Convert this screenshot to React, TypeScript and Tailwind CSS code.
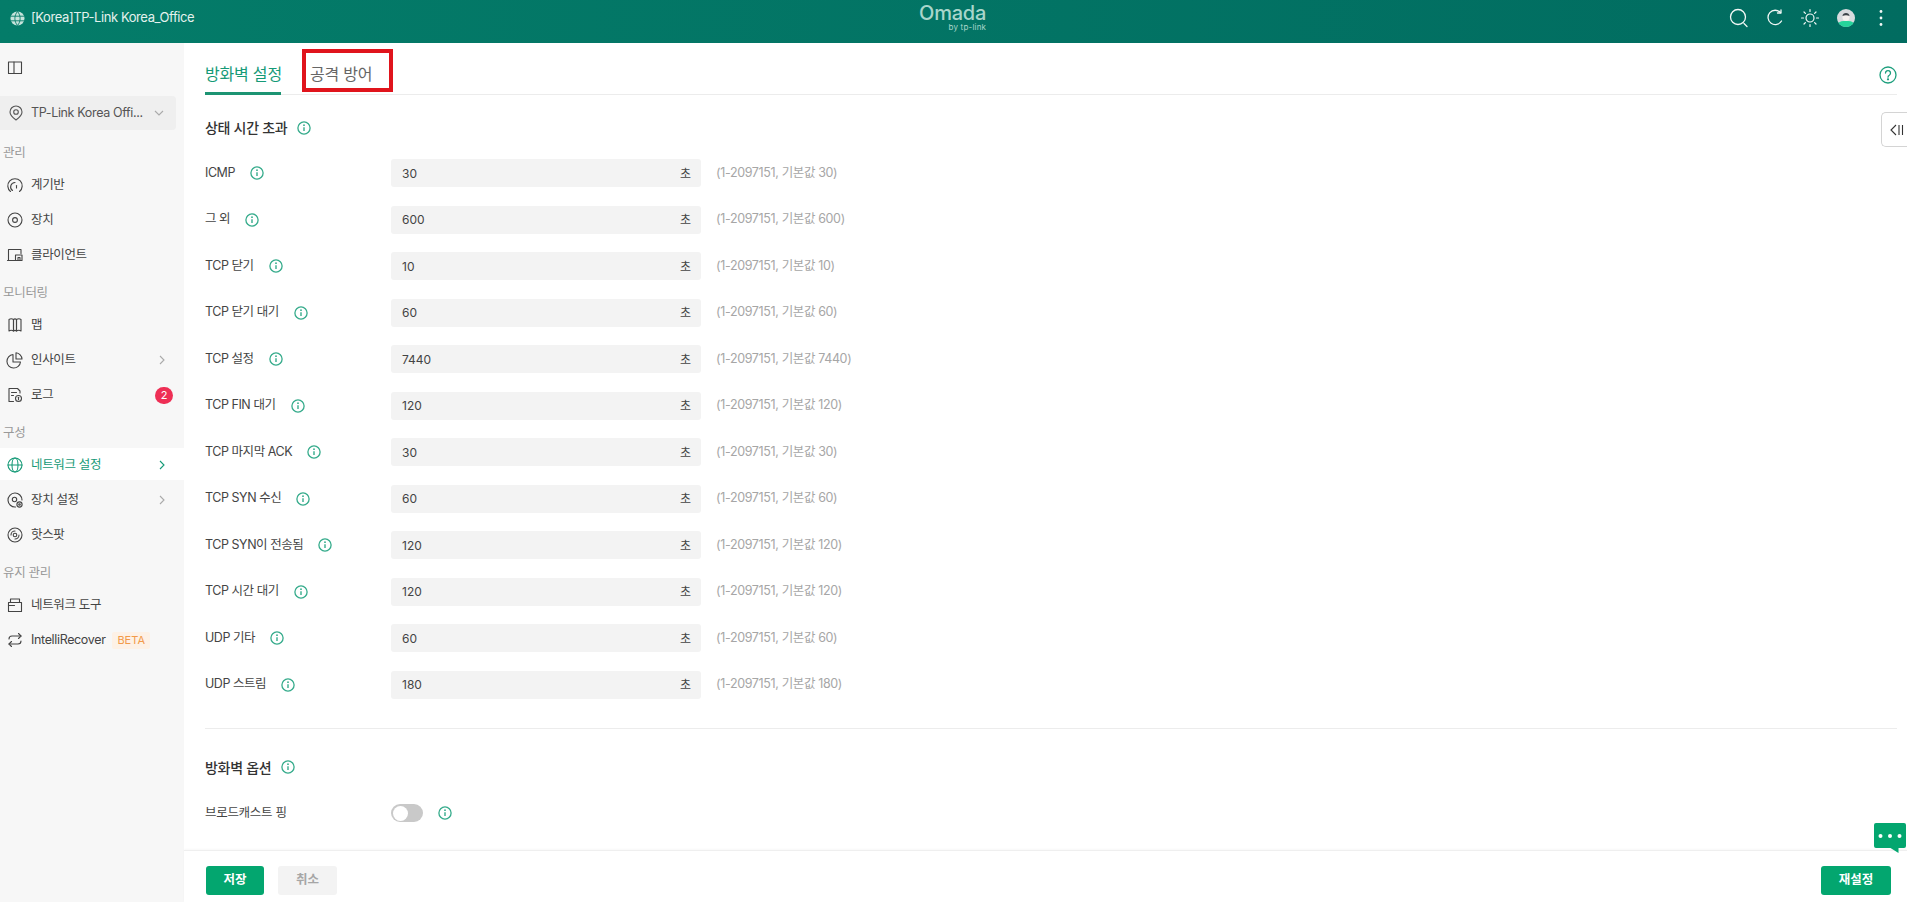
import React from "react";

const FONT = "font-[family-name:Inter,'Noto_Sans_CJK_KR',sans-serif]";

type IconProps = { className?: string };

const Svg = ({ className, children, size = 18 }: IconProps & { children: React.ReactNode; size?: number }) => (
  <svg width={size} height={size} viewBox="0 0 18 18" fill="none" stroke="currentColor" strokeWidth={1.1} strokeLinecap="round" strokeLinejoin="round" className={className}>
    {children}
  </svg>
);

const Info = () => (
  <svg width="14" height="14" viewBox="0 0 14 14" fill="none" className="shrink-0 text-[#35ab8b]">
    <circle cx="7" cy="7" r="6.1" stroke="currentColor" strokeWidth="1.3" />
    <circle cx="7" cy="4.2" r="0.9" fill="currentColor" />
    <path d="M7 6.2V10" stroke="currentColor" strokeWidth="1.4" />
  </svg>
);

const Panel = () => (
  <Svg><rect x="2.5" y="3" width="13" height="11.5" /><path d="M8 3v11.5" /></Svg>
);
const Pin = () => (
  <Svg><path d="M9 16c-3.5-2.5-6-5-6-8a6 6 0 0 1 12 0c0 3-2.500 5.500-6 8z" /><circle cx="9" cy="8" r="2.3" /></Svg>
);
const Gauge = () => (
  <Svg><path d="M4.500 15.500A7.200 7.200 0 1 1 13.500 15.500" /><path d="M6.500 14.500A4.400 4.400 0 0 1 9 6.500" /><path d="M10.500 9.500v2.500" /></Svg>
);
const Device = () => (
  <Svg><circle cx="9" cy="9" r="7" /><circle cx="9" cy="9" r="2.400" /></Svg>
);
const Client = () => (
  <Svg><path d="M2.500 14V3.500h12.500v4" /><path d="M1.500 14.500h7.500" /><path d="M9.500 9h6.500v5.500H9.500z" /><path d="M12 14.500v-3h2v3" /></Svg>
);
const MapI = () => (
  <Svg><path d="M3 3.500c1.500-1 3-1 4.500 0v11.500c-1.500-1-3-1-4.500 0z" /><path d="M7.500 3.500c1-.8 2-.8 3 0v11.500c-1-.8-2-.8-3 0z" /><path d="M10.500 3.500c1.500-1 3-1 4.500 0v11.500c-1.500-1-3-1-4.500 0z" /></Svg>
);
const Pie = () => (
  <Svg><path d="M7 3.500a6.800 6.800 0 1 0 7.500 7.500H7z" /><path d="M10 1.800a6.500 6.500 0 0 1 6 6.200h-6z" /></Svg>
);
const Log = () => (
  <Svg><path d="M7.500 15.500H3v-13h8.500l2.500 2.500v2" /><path d="M5.500 6.500h5M5.500 9.500h2" /><circle cx="12.500" cy="12.500" r="3" /><path d="M12.500 11.300v2.400" /></Svg>
);
const Globe = () => (
  <Svg><circle cx="9" cy="9" r="7" /><ellipse cx="9" cy="9" rx="3" ry="7" /><path d="M2 9h14" /></Svg>
);
const DeviceCfg = () => (
  <Svg><path d="M9.500 16A7 7 0 1 1 16 9" /><circle cx="8.500" cy="8.500" r="2.200" /><circle cx="13.500" cy="13.500" r="2.600" /><circle cx="13.500" cy="13.500" r="0.800" /></Svg>
);
const Hotspot = () => (
  <Svg><circle cx="9" cy="9" r="7" /><circle cx="9" cy="9" r="1.800" /><path d="M5 9a4 4 0 0 1 4-4M13 9a4 4 0 0 1-4 4" /></Svg>
);
const Toolbox = () => (
  <Svg><path d="M2.500 6.500h13v9h-13z" /><path d="M4.500 6.500V3h9v3.500" /><path d="M2.500 9.500h6" /></Svg>
);
const Recover = () => (
  <Svg><path d="M3 8c0-2 1.500-3 3-3h9" /><path d="M12.500 2.500L15 5l-2.500 2.500" /><path d="M15 10c0 2-1.500 3-3 3H3" /><path d="M5.500 15.500L3 13l2.500-2.500" /></Svg>
);
const Chevron = ({ dim }: { dim?: boolean }) => (
  <svg width="8" height="12" viewBox="0 0 8 12" fill="none" stroke="currentColor" strokeWidth="1.100" className={`mr-[7px] ${dim ? "text-[#aaaaaa]" : "text-[#159a77]"}`}>
    <path d="M2 2l4 4-4 4" />
  </svg>
);

const SectionLabel = ({ children }: { children: React.ReactNode }) => (
  <div className="h-8 pt-[8px] pl-[3px] flex items-center text-[12.5px] text-[#999999] tracking-[-0.3px]">{children}</div>
);

const NavItem = ({ icon, label, chevron, active, badge, beta }: { icon: React.ReactNode; label: string; chevron?: boolean; active?: boolean; badge?: string; beta?: boolean }) => (
  <div className={`h-8 pt-[2px] flex items-center pl-[6px] pr-[11px] text-[12.500px] tracking-[-0.35px] ${active ? "bg-white text-[#159a77]" : "text-[#444444]"}`}>
    <span className={`w-[25px] shrink-0 flex ${active ? "text-[#159a77]" : "text-[#444444]"}`}>{icon}</span>
    <span className="flex-1 whitespace-nowrap">{label}</span>
    {beta && <span className="mr-[23px] h-[17px] px-[5px] rounded-[2px] bg-[#fdf1e6] text-[#f29a4a] text-[11px] tracking-normal flex items-center">BETA</span>}
    {chevron && <Chevron dim={!active} />}
    {badge && <span className="w-[18px] h-[17px] rounded-full bg-[#ee2f55] text-white text-[11px] tracking-normal flex items-center justify-center">{badge}</span>}
  </div>
);

const rows: [string, string][] = [
  ["ICMP", "30"],
  ["그 외", "600"],
  ["TCP 닫기", "10"],
  ["TCP 닫기 대기", "60"],
  ["TCP 설정", "7440"],
  ["TCP FIN 대기", "120"],
  ["TCP 마지막 ACK", "30"],
  ["TCP SYN 수신", "60"],
  ["TCP SYN이 전송됨", "120"],
  ["TCP 시간 대기", "120"],
  ["UDP 기타", "60"],
  ["UDP 스트림", "180"],
];

const Row = ({ label, value }: { label: string; value: string }) => (
  <div className="h-[46.500px] flex items-center">
    <div className="w-[186px] shrink-0 flex items-center gap-[15px] text-[12.500px] text-[#444444] tracking-[-0.45px] whitespace-nowrap">
      <span>{label}</span>
      <Info />
    </div>
    <div className="w-[310px] h-[28px] shrink-0 rounded-[3px] bg-[#f3f3f3] flex items-center justify-between pl-[11px] pr-[10px] pt-[1px] text-[12px] text-[#444444]">
      <span>{value}</span>
      <span className="text-[12px]">초</span>
    </div>
    <div className="ml-[15px] text-[12.500px] text-[#a6a6a6] tracking-[-0.36px] whitespace-nowrap">{`(1-2097151, 기본값 ${value})`}</div>
  </div>
);

const Toggle = () => <div className="w-[32px] h-[18px] rounded-full bg-[#c9c9c9] p-[1.500px] flex items-center"><div className="w-[15px] h-[15px] rounded-full bg-white" /></div>;

export default function App() {
  return (
    <div className={`${FONT} w-[1907px] h-[902px] flex flex-col overflow-hidden bg-white`}>
      <header className="relative h-[43px] shrink-0 pb-[7px] flex items-center justify-between bg-gradient-to-r from-[#047c69] to-[#016c60] text-white">
        <div className="flex items-center pl-[10px]">
          <svg width="15" height="15" viewBox="0 0 15 15" className="text-[#c6e3db]">
            <circle cx="7.500" cy="7.500" r="7" fill="currentColor" />
            <path d="M0.500 5.200h14M0.500 9.800h14M7.500 0.500c-3.500 4-3.500 10 0 14M7.500 0.500c3.500 4 3.500 10 0 14" stroke="#047c69" strokeWidth="0.900" fill="none" />
          </svg>
          <span className="ml-[6px] text-[13px] tracking-[-0.42px] text-[#e3f1ed] whitespace-nowrap">[Korea]TP-Link Korea_Office</span>
        </div>
        <div className="absolute left-[919px] top-[3px] flex flex-col items-end text-[#a9d6cb]">
          <span className="text-[20px] leading-[20px] font-medium tracking-[-0.2px]">Omada</span>
          <span className="text-[8px] leading-[8px] tracking-[0.2px]">by tp-link</span>
        </div>
        <div className="flex items-center gap-[15.500px] pr-[16px] text-[#f2f8f6]">
          <svg width="20" height="20" viewBox="0 0 20 20" fill="none" stroke="currentColor" strokeWidth="1.300" strokeLinecap="round"><circle cx="9" cy="9" r="7.500" /><path d="M15 15.500l3 3" /></svg>
          <svg width="20" height="20" viewBox="0 0 20 20" fill="none" stroke="currentColor" strokeWidth="1.300" strokeLinecap="round" strokeLinejoin="round"><path d="M15.500 4.500A7.200 7.200 0 1 0 16.500 13" /><path d="M12.500 5h3.500V1.800" /></svg>
          <svg width="20" height="20" viewBox="0 0 20 20" fill="none" stroke="currentColor" strokeWidth="1.200" strokeLinecap="round"><circle cx="10" cy="10" r="4" /><path d="M10 1.500v2M10 16.500v2M1.500 10h2M16.500 10h2M4 4l1.400 1.400M14.600 14.600L16 16M4 16l1.400-1.400M14.600 5.400L16 4" /></svg>
          <svg width="20" height="20" viewBox="0 0 20 20">
            <circle cx="10" cy="10" r="9" fill="#d8dbde" />
            <path d="M2.500 15c2-3 13-3 15 0a9 9 0 0 1-15 0z" fill="#26d39b" />
            <circle cx="10" cy="9.500" r="3.500" fill="#f5f1ee" />
            <path d="M6.500 8c0-4 7-4 7 0-2-1-5-1-7 0z" fill="#3c4348" />
          </svg>
          <svg width="20" height="20" viewBox="0 0 20 20" fill="currentColor"><circle cx="10" cy="3.500" r="1.400" /><circle cx="10" cy="10" r="1.400" /><circle cx="10" cy="16.500" r="1.400" /></svg>
        </div>
      </header>

      <div className="flex-1 min-h-0 flex">
        <aside className="w-[184px] shrink-0 bg-[#f7f7f7] flex flex-col">
          <div className="h-[53px] pl-[6px] pt-[16px] text-[#444444]"><Panel /></div>
          <div className="flex flex-col gap-[3px]">
            <div className="w-[176px] h-[34px] rounded-r-[4px] bg-[#efefef] flex items-center pl-[7px] pr-[12px] text-[12.500px] text-[#555555] tracking-[-0.35px]">
              <span className="w-[24px] flex"><Pin /></span>
              <span className="flex-1 whitespace-nowrap">TP-Link Korea Offi...</span>
              <svg width="10" height="7" viewBox="0 0 10 7" fill="none" stroke="#aaaaaa" strokeWidth="1.100"><path d="M1 1l4 4 4-4" /></svg>
            </div>
            <SectionLabel>관리</SectionLabel>
            <NavItem icon={<Gauge />} label="계기반" />
            <NavItem icon={<Device />} label="장치" />
            <NavItem icon={<Client />} label="클라이언트" />
            <SectionLabel>모니터링</SectionLabel>
            <NavItem icon={<MapI />} label="맵" />
            <NavItem icon={<Pie />} label="인사이트" chevron />
            <NavItem icon={<Log />} label="로그" badge="2" />
            <SectionLabel>구성</SectionLabel>
            <NavItem icon={<Globe />} label="네트워크 설정" chevron active />
            <NavItem icon={<DeviceCfg />} label="장치 설정" chevron />
            <NavItem icon={<Hotspot />} label="핫스팟" />
            <SectionLabel>유지 관리</SectionLabel>
            <NavItem icon={<Toolbox />} label="네트워크 도구" />
            <NavItem icon={<Recover />} label="IntelliRecover" beta />
          </div>
        </aside>

        <main className="relative flex-1 min-w-0 flex flex-col">
          <div className="flex-1 min-h-0 overflow-hidden pl-[21px] pr-[10px]">
            <div className="h-[52px] flex items-stretch border-b border-[#ececec]">
              <div className="w-[76px] h-[52px] pt-[18px] text-[16px] leading-[26px] text-[#159a77] border-b-[3px] border-[#1d9473] tracking-[-0.2px] whitespace-nowrap">방화벽 설정</div>
              <div className="ml-[29px] pt-[18px] text-[16px] leading-[26px] text-[#666666] tracking-[-0.2px] whitespace-nowrap">공격 방어</div>
              <div className="ml-auto mt-[23px] text-[#1d9f7d]">
                <svg width="18" height="18" viewBox="0 0 18 18" fill="none" stroke="currentColor" strokeWidth="1.300" strokeLinecap="round"><circle cx="9" cy="9" r="8" /><path d="M6.500 7a2.500 2.500 0 1 1 3.800 2.200c-.9.500-1.300 1-1.300 2" /><circle cx="9" cy="13.300" r="0.500" /></svg>
              </div>
            </div>
            <div className="h-[55px] pt-[10px] flex items-center gap-[10px] text-[14px] font-medium text-[#333333] tracking-[-0.3px]">
              <span>상태 시간 초과</span>
              <Info />
            </div>
            {rows.map(([l, v]) => (
              <Row key={l} label={l} value={v} />
            ))}
            <div className="mt-[20px] border-t border-[#ececec]" />
            <div className="h-[76px] flex items-center gap-[10px] text-[14px] font-medium text-[#333333] tracking-[-0.3px]">
              <span>방화벽 옵션</span>
              <Info />
            </div>
            <div className="h-[16px]" />
            <div className="-mt-[31px] h-[46.500px] flex items-center">
              <div className="w-[186px] shrink-0 text-[12.500px] text-[#444444] tracking-[-0.3px]">브로드캐스트 핑</div>
              <Toggle />
              <span className="ml-[15px]"><Info /></span>
            </div>
            <div className="h-[46.500px] flex items-center pl-[186px]"><Toggle /></div>
          </div>

          <footer className="h-[52px] shrink-0 border-t border-[#efefef] shadow-[0_-1px_2px_rgba(0,0,0,0.03)] flex items-center justify-between pl-[22px] pr-[16px] pt-[7px] text-[12.500px] font-semibold bg-white">
            <div className="flex items-center gap-[14px]">
              <div className="w-[58px] h-[29px] pt-[1px] rounded-[3px] bg-[#03a66f] text-white flex items-center justify-center">저장</div>
              <div className="w-[59px] h-[29px] pt-[1px] rounded-[3px] bg-[#f3f3f3] text-[#a6a6a6] flex items-center justify-center">취소</div>
            </div>
            <div className="w-[70px] h-[29px] pt-[1px] rounded-[3px] bg-[#03a66f] text-white flex items-center justify-center">재설정</div>
          </footer>

          <div className="absolute left-[118px] top-[6px] w-[91px] h-[43px] border-4 border-[#e0141c]" />

          <div className="absolute right-0 top-[69px] w-[26px] h-[35px] border border-r-0 border-[#d4d4d4] rounded-l-[5px] bg-white flex items-center pl-[8px]">
            <svg width="16" height="14" viewBox="0 0 16 14" fill="none" stroke="#333333" strokeWidth="1.100"><path d="M6 2L1 7l5 5M9 2v10M12.500 2v10" /></svg>
          </div>

          <svg width="32" height="30" viewBox="0 0 32 30" className="absolute right-[1px] top-[780px]">
            <path d="M2 0h28a2 2 0 0 1 2 2v21a2 2 0 0 1-2 2h-5.500v5l-8-5H2a2 2 0 0 1-2-2V2a2 2 0 0 1 2-2z" fill="#03a66f" />
            <circle cx="6.500" cy="13" r="2" fill="#ffffff" />
            <circle cx="16" cy="13" r="2" fill="#ffffff" />
            <circle cx="25.500" cy="13" r="2" fill="#ffffff" />
          </svg>
        </main>
      </div>
    </div>
  );
}
